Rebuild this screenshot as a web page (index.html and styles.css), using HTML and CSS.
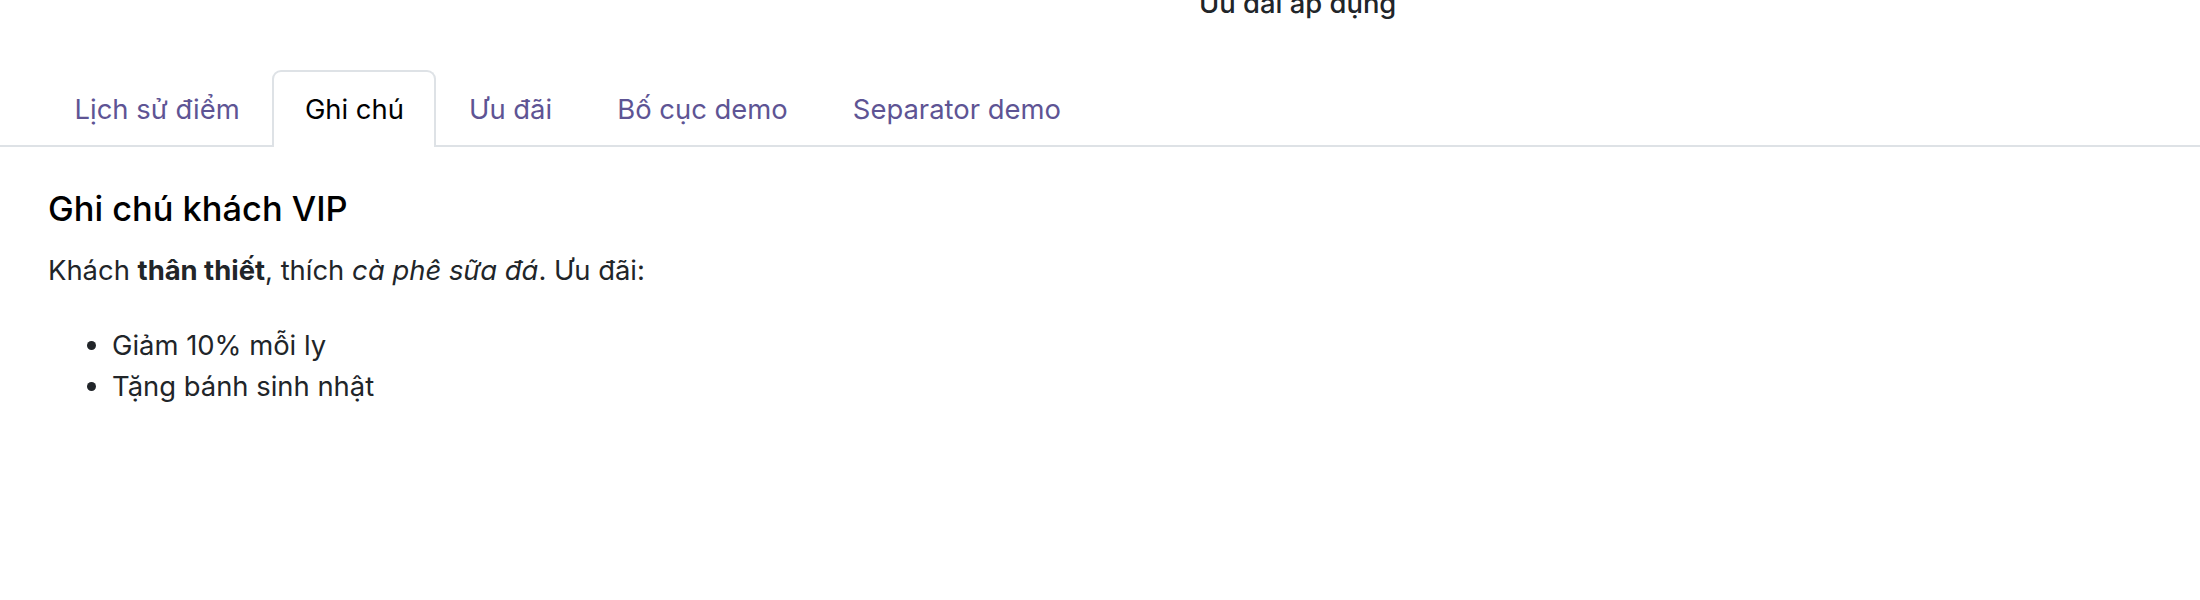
FILE: index.html
```html
<!DOCTYPE html>
<html lang="vi">
<head>
<meta charset="utf-8">
<title>Ghi chú khách VIP</title>
<link rel="stylesheet" href="styles.css">
</head>
<body>
<div class="peek"><span class="peek-title">Ưu đãi áp dụng</span></div>
<nav class="tabs">
  <a class="tab" href="#">Lịch sử điểm</a>
  <a class="tab active" href="#">Ghi chú</a>
  <a class="tab" href="#">Ưu đãi</a>
  <a class="tab" href="#">Bố cục demo</a>
  <a class="tab" href="#">Separator demo</a>
</nav>
<section class="pane">
  <h2 class="pane-title">Ghi chú khách VIP</h2>
  <p class="note">Khách <strong>thân thiết</strong>, thích <em>cà phê sữa đá</em>. Ưu đãi:</p>
  <ul class="perks">
    <li>Giảm 10% mỗi ly</li>
    <li>Tặng bánh sinh nhật</li>
  </ul>
</section>
</body>
</html>
```
FILE: styles.css
```css
html, body {
  margin: 0;
  padding: 0;
  background: #ffffff;
}
body {
  font-family: Inter, "Noto Sans", "Liberation Sans", sans-serif;
  font-size: 27.4px;
  line-height: 41px;
  color: #212529;
}
.peek {
  margin-top: -10px;
  height: 27px;
  line-height: 27px;
  padding-left: 1199px;
  font-weight: 500;
  color: #212529;
}
.tabs {
  display: flex;
  margin-top: 53px;
  padding-left: 42px;
  border-bottom: 2px solid #dee2e6;
}
.tab {
  display: block;
  padding: 18px 30.6px 19px;
  line-height: 38px;
  border: 2px solid transparent;
  border-bottom: 0;
  border-radius: 9px 9px 0 0;
  margin-bottom: -2px;
  color: #5e5494;
  text-decoration: none;
}
.tab.active {
  color: #000000;
  border-color: #dee2e6;
  background: #ffffff;
}
.pane {
  padding-left: 48px;
}
.pane-title {
  margin: 41px 0 21px;
  font-size: 34.4px;
  line-height: 1.2;
  font-weight: 500;
  color: #000000;
}
.note {
  margin: 0 0 34px;
}
.note strong {
  font-weight: 700;
}
.perks {
  margin: 0;
  padding-left: 64px;
}
```
